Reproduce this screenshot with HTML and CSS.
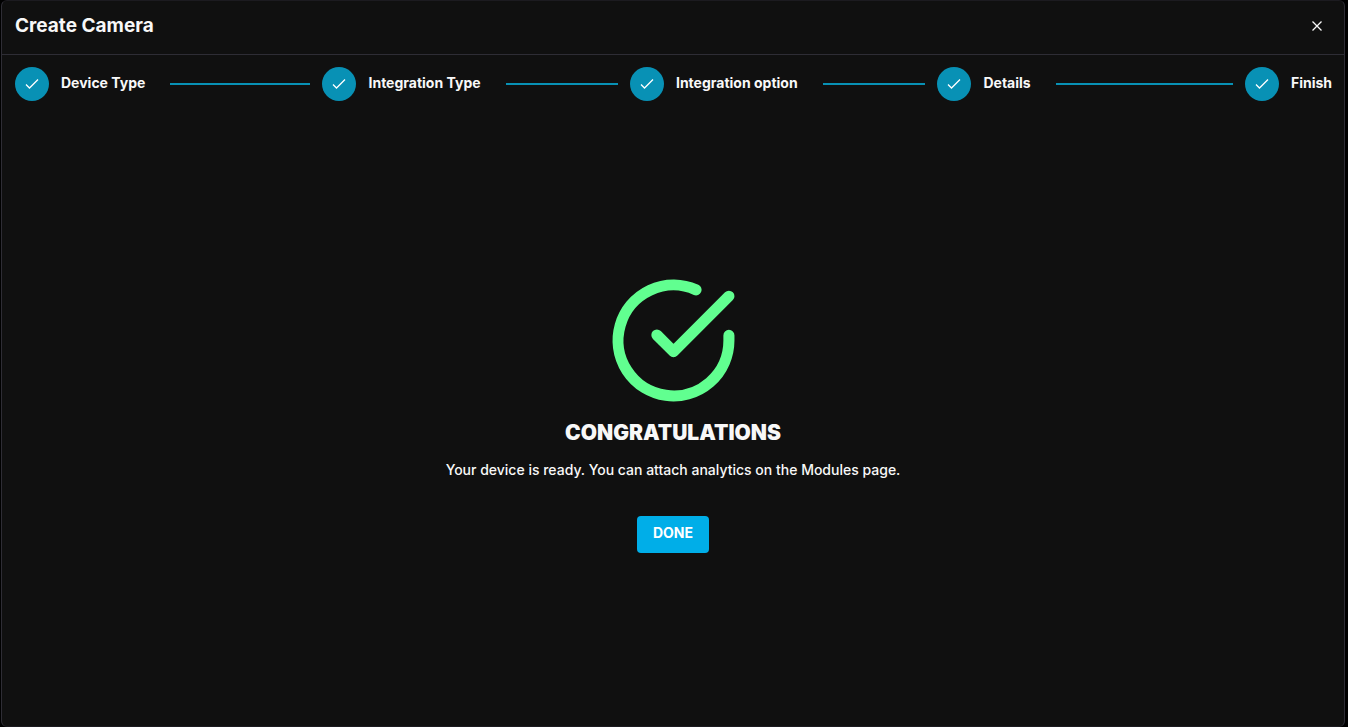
FILE: index.html
```html
<!DOCTYPE html>
<html lang="en">
<head>
  <meta charset="UTF-8" />
  <title>Create Camera</title>
  <link rel="stylesheet" href="styles.css">
</head>
<body>
  <svg class="sprite" aria-hidden="true">
    <symbol id="check" viewBox="0 0 14 14">
      <path d="M1 7.5 4.5 11 13 2.5" fill="none" stroke="currentColor" stroke-width="1.3" />
    </symbol>
  </svg>

  <div class="modal" role="dialog" aria-labelledby="modal-title">
    <header class="modal-header">
      <h1 class="modal-title" id="modal-title">Create Camera</h1>
      <button class="close" type="button" aria-label="Close">
        <svg width="10" height="10" viewBox="0 0 10 10"><path d="M.5.5l9 9M9.5.5l-9 9" fill="none" stroke="currentColor" stroke-width="1.3" /></svg>
      </button>
    </header>

    <ol class="steps">
      <li class="step">
        <span class="step-icon"><svg><use href="#check" /></svg></span>
        <span class="step-label">Device Type</span>
      </li>
      <li class="step">
        <span class="step-icon"><svg><use href="#check" /></svg></span>
        <span class="step-label">Integration Type</span>
      </li>
      <li class="step">
        <span class="step-icon"><svg><use href="#check" /></svg></span>
        <span class="step-label">Integration option</span>
      </li>
      <li class="step">
        <span class="step-icon"><svg><use href="#check" /></svg></span>
        <span class="step-label">Details</span>
      </li>
      <li class="step">
        <span class="step-icon"><svg><use href="#check" /></svg></span>
        <span class="step-label">Finish</span>
      </li>
    </ol>

    <main class="result">
      <svg class="result-icon" viewBox="0 0 24 24" fill="none" stroke="currentColor" stroke-width="2" stroke-linecap="round" stroke-linejoin="round">
        <path d="M22 11.08V12a10 10 0 1 1-5.93-9.14" />
        <polyline points="22 4 12 14.01 9 11.01" />
      </svg>
      <h2 class="result-title">CONGRATULATIONS</h2>
      <p class="result-text">Your device is ready. You can attach analytics on the Modules page.</p>
      <button class="done" type="button">DONE</button>
    </main>
  </div>
</body>
</html>
```

FILE: styles.css
```css
* { box-sizing: border-box; }
body { margin: 0; background: #000; color: #f8f8f8; font-family: Inter, "Liberation Sans", sans-serif; font-size: 14px; }
button { font-family: inherit; border: none; cursor: pointer; }
.sprite { display: none; }

.modal { display: flex; flex-direction: column; min-height: 100vh; margin: 0 3px 0 1px; background: #101010; border: 1px solid #2e2d35; border-top-color: #1c1b20; border-bottom-color: #1c1b20; border-radius: 6px; }
.modal-header { display: flex; align-items: center; justify-content: space-between; height: 54px; padding: 0 13px 4px; border-bottom: 1px solid #2e2d35; }
.modal-title { margin: 0; font-size: 19px; line-height: 24px; font-weight: 700; }
.close { display: flex; padding: 9px; background: none; color: #f8f8f8; }

.steps { display: flex; margin: 0; padding: 12px 12px 12px 13px; list-style: none; }
.step { display: flex; align-items: center; flex: 1 1 0; white-space: nowrap; }
.step:last-child { flex: none; }
.step::after { content: ""; flex: 1; height: 2px; margin: 0 12px 0 25px; background: #0891b5; }
.step:last-child::after { display: none; }
.step-icon { display: flex; align-items: center; justify-content: center; width: 34px; height: 34px; margin-right: 12px; border-radius: 50%; background: #0891b5; color: #fff; }
.step-icon svg { width: 14px; height: 14px; }
.step-label { line-height: 20px; font-weight: 700; padding-bottom: 2px; }

.result { display: flex; flex: 1; flex-direction: column; align-items: center; justify-content: center; padding-bottom: 13px; text-align: center; }
.result-icon { width: 133px; height: 133px; color: #61ff90; }
.result-title { margin: 13px 0; font-size: 21px; line-height: 26px; font-weight: 900; }
.result-text { margin: 0 0 35px; line-height: 22px; font-weight: 500; }
.done { padding: 6px 16px 9px; border-radius: 4px; background: #00aee8; color: #fff; font-size: 14px; line-height: 22px; font-weight: 700; }
```
